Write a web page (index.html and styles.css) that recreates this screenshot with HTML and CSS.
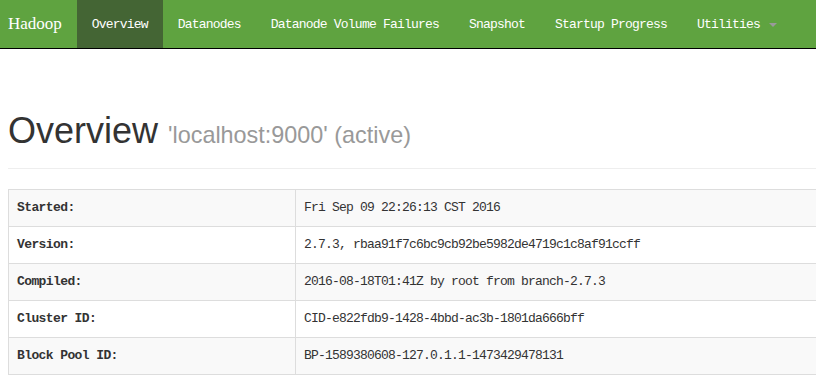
FILE: index.html
```html
<!DOCTYPE html>
<html lang="en">
<head>
  <meta charset="UTF-8">
  <title>Namenode information</title>
  <link rel="stylesheet" href="styles.css">
</head>
<body>

  <!-- top navigation -->
  <header class="navbar">
    <a class="navbar-brand" href="#">Hadoop</a>
    <ul class="nav">
      <li class="active"><a href="#">Overview</a></li>
      <li><a href="#">Datanodes</a></li>
      <li><a href="#">Datanode Volume Failures</a></li>
      <li><a href="#">Snapshot</a></li>
      <li><a href="#">Startup Progress</a></li>
      <li><a href="#">Utilities <span class="caret"></span></a></li>
    </ul>
  </header>

  <div class="container">
    <div class="page-header">
      <h1>Overview <small>'localhost:9000' (active)</small></h1>
    </div>

    <table class="info-table">
      <colgroup>
        <col class="label-col">
        <col>
      </colgroup>
      <tr><th>Started:</th><td>Fri Sep 09 22:26:13 CST 2016</td></tr>
      <tr><th>Version:</th><td>2.7.3, rbaa91f7c6bc9cb92be5982de4719c1c8af91ccff</td></tr>
      <tr><th>Compiled:</th><td>2016-08-18T01:41Z by root from branch-2.7.3</td></tr>
      <tr><th>Cluster ID:</th><td>CID-e822fdb9-1428-4bbd-ac3b-1801da666bff</td></tr>
      <tr><th>Block Pool ID:</th><td>BP-1589380608-127.0.1.1-1473429478131</td></tr>
    </table>
  </div>

</body>
</html>
```

FILE: styles.css
```css
/* page */
body {
  margin: 0;
  background: #fff;
  color: #333;
  font-family: "Liberation Sans", Arial, sans-serif;
  font-size: 14px;
}

/* navigation bar */
.navbar {
  display: flex;
  height: 48px;
  background-color: #5fa340;
  border-bottom: 1px solid #000;
}

.navbar a {
  color: #fff;
  text-decoration: none;
}

.navbar-brand {
  padding: 0 15px 0 8px;
  font-family: "Liberation Serif", "Times New Roman", serif;
  font-size: 17px;
  line-height: 48px;
  height: 48px;
}

.nav {
  display: flex;
  margin: 0;
  padding: 0;
  list-style: none;
}

.nav a {
  display: block;
  padding: 15px 15px 13px;
  line-height: 20px;
  font-family: "Liberation Mono", "Courier New", monospace;
  font-size: 13px;
  letter-spacing: -0.8px;
  white-space: pre;
}

.nav .active a {
  background-color: #446534;
}

.caret {
  display: inline-block;
  width: 0;
  height: 0;
  margin-left: 2px;
  vertical-align: middle;
  border-top: 4px solid #9a9a9a;
  border-left: 4px solid transparent;
  border-right: 4px solid transparent;
}

/* content: runs on past the right edge, so no right padding */
.container {
  padding-left: 8px;
}

.page-header {
  margin-top: 62px;
  padding-bottom: 17px;
  border-bottom: 1px solid #eee;
}

h1 {
  margin: 0;
  font-size: 36px;
  font-weight: normal;
  line-height: 40px;
  color: #333;
}

h1 small {
  font-size: 65%;
  line-height: 1;
  color: #999;
}

/* info table */
.info-table {
  width: 100%;
  margin-top: 20px;
  border-collapse: collapse;
  table-layout: fixed;
}

.label-col {
  width: 287px;
}

.info-table th,
.info-table td {
  padding: 8px;
  line-height: 20px;
  border: 1px solid #ddd;
  text-align: left;
  font-family: "Liberation Mono", "Courier New", monospace;
  font-size: 13px;
  color: #333;
  white-space: nowrap;
}

.info-table td {
  border-right: 0;
  letter-spacing: -0.8px;
}

.info-table th {
  font-weight: bold;
  letter-spacing: -0.6px;
}

.info-table tr:nth-child(odd) {
  background-color: #f9f9f9;
}
```
